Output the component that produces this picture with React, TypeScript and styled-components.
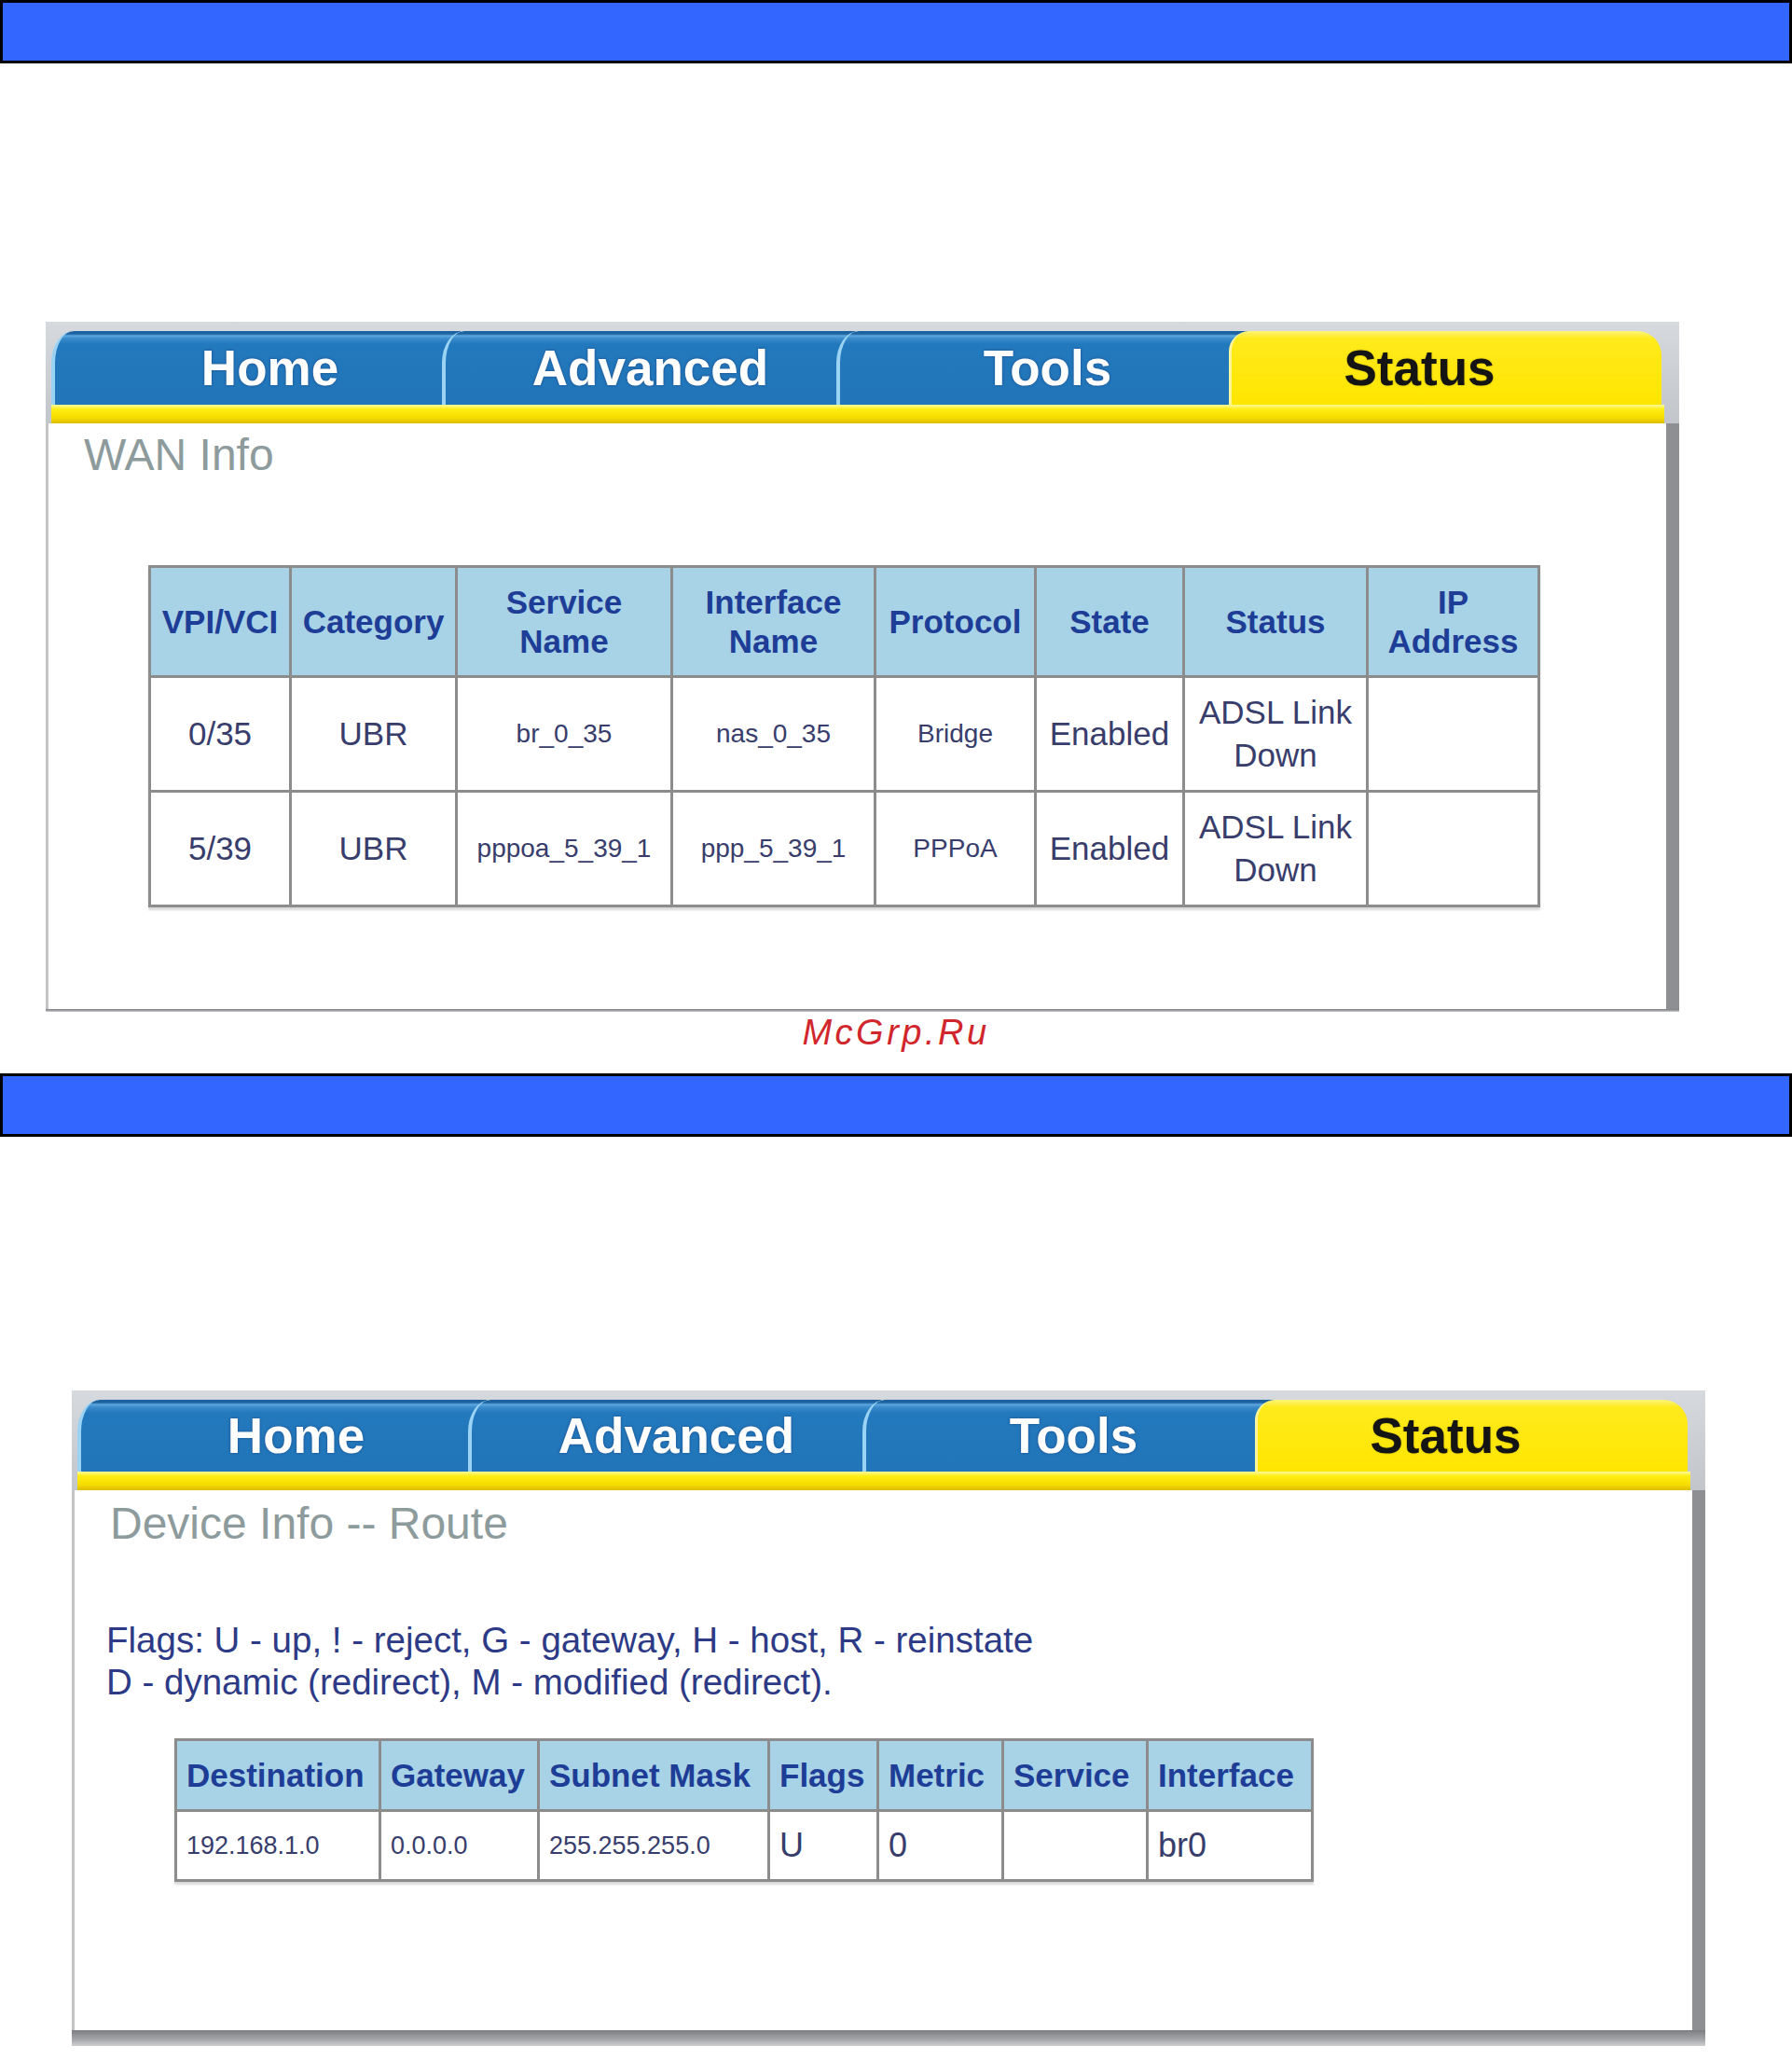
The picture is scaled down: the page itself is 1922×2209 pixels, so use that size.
import styled, { createGlobalStyle } from "styled-components";

const GlobalStyle = createGlobalStyle`
  html, body {
    margin: 0;
    padding: 0;
    background: #fff;
  }
  body {
    font-family: "Liberation Sans", Arial, sans-serif;
  }
`;

const Page = styled.div`
  display: flex;
  flex-direction: column;
  width: 1922px;
  height: 2209px;
  overflow: hidden;
`;

const BlueBar = styled.div<{ $gap: number }>`
  box-sizing: border-box;
  flex: 0 0 68px;
  margin-top: ${(p) => p.$gap}px;
  background: #3366ff;
  border: 3px solid #000;
`;

const Panel = styled.section<{ $left: number; $top: number }>`
  display: flex;
  flex-direction: column;
  width: 1752px;
  margin: ${(p) => p.$top}px 0 0 ${(p) => p.$left}px;
`;

const Head = styled.div`
  padding: 10px 16px 0 6px;
  background: linear-gradient(to bottom, #d6d9dd, #c2c6cb);
`;

const TabRow = styled.div<{ $h: number }>`
  display: flex;
  height: ${(p) => p.$h}px;
`;

const Tab = styled.div<{ $w: number; $active?: boolean; $shift: number }>`
  box-sizing: border-box;
  flex: 0 0 ${(p) => p.$w}px;
  margin-right: ${(p) => (p.$active ? 0 : -20)}px;
  display: flex;
  align-items: center;
  justify-content: center;
  padding-left: ${(p) => Math.max(0, p.$shift * 2)}px;
  padding-right: ${(p) => Math.max(0, -p.$shift * 2)}px;
  font: bold 53px/1 "Liberation Sans", Arial, sans-serif;
  ${(p) =>
    p.$active
      ? `
    color: #141414;
    background: linear-gradient(to bottom, #fff57a 0, #ffea1c 8px, #ffe600 100%);
    border-left: 3px solid #fff59a;
    border-radius: 22px 26px 0 0;
    text-shadow: 0 0 2px rgba(90, 80, 0, 0.4);
  `
      : `
    color: #fff;
    background: linear-gradient(
      to bottom,
      #1c62a0 0,
      #1c62a0 3px,
      #5ea8df 5px,
      #3a8bcb 8px,
      #2379bd 14px,
      #2175b8 100%
    );
    border-left: 4px solid #9ad3f3;
    border-top-left-radius: 24px 34px;
    text-shadow: 0 0 3px rgba(30, 70, 130, 0.9);
  `}
`;

const Stripe = styled.div`
  height: 20px;
  background: linear-gradient(
    to bottom,
    #fffa9c 0%,
    #ffee12 25%,
    #f8dc00 70%,
    #dcbc00 100%
  );
`;

const Body = styled.div<{ $h: number }>`
  box-sizing: border-box;
  height: ${(p) => p.$h}px;
  display: flex;
  flex-direction: column;
  align-items: flex-start;
  background: #fff;
  border-left: 3px solid #c4c4c4;
  border-right: 14px solid #8d8f93;
`;

const Footer = styled.div<{ $h: number }>`
  height: ${(p) => p.$h}px;
  background: linear-gradient(to bottom, #7c7e82, #a4a6a9 60%, #cfd0d2);
`;

const Title = styled.h2<{ $top: number }>`
  margin: ${(p) => p.$top}px 0 0 0;
  padding-left: 38px;
  font: normal 48px/52px "Liberation Sans", Arial, sans-serif;
  color: #8d9b9c;
`;

const Flags = styled.p`
  margin: 76px 0 0 0;
  padding-left: 34px;
  font: normal 38.5px/45px "Liberation Sans", Arial, sans-serif;
  color: #2d3a86;
`;

const Grid = styled.table<{ $top: number; $w: number }>`
  margin: ${(p) => p.$top}px 0 0 107px;
  width: ${(p) => p.$w}px;
  table-layout: fixed;
  border-collapse: collapse;
  border: 3px solid #8c8c8c;
  box-shadow: 0 3px 2px rgba(0, 0, 0, 0.15);
`;

const Col = styled.col<{ $w: number }>`
  width: ${(p) => p.$w}px;
`;

const Row = styled.tr<{ $h: number }>`
  height: ${(p) => p.$h}px;
`;

const HeadCell = styled.th<{ $left?: boolean }>`
  padding: 0 ${(p) => (p.$left ? "0 0 10px" : "4px")};
  border: 3px solid #8c8c8c;
  background: #a8d3e7;
  color: #1d3d96;
  font: bold 35px/42px "Liberation Sans", Arial, sans-serif;
  text-align: ${(p) => (p.$left ? "left" : "center")};
  white-space: nowrap;
`;

const Cell = styled.td<{ $size: number; $left?: boolean }>`
  padding: 0 ${(p) => (p.$left ? "0 0 10px" : "4px")};
  border: 3px solid #8c8c8c;
  background: #fff;
  color: #383d6c;
  font: normal ${(p) => p.$size}px/46px "Liberation Sans", Arial, sans-serif;
  text-align: ${(p) => (p.$left ? "left" : "center")};
  vertical-align: middle;
`;

const Watermark = styled.div`
  margin-top: 4px;
  height: 36px;
  text-align: center;
  font: italic 38px/36px "Liberation Sans", Arial, sans-serif;
  letter-spacing: 3.5px;
  color: #d1262c;
`;

const tabs = [
  { label: "Home", w: 439, shift: 13 },
  { label: "Advanced", w: 443, shift: 0 },
  { label: "Tools", w: 441, shift: 4 },
  { label: "Status", w: 464, shift: -29, active: true },
];

function TabBar({ h }: { h: number }) {
  return (
    <Head>
      <TabRow $h={h}>
        {tabs.map((t) => (
          <Tab key={t.label} $w={t.w} $shift={t.shift} $active={t.active}>
            {t.label}
          </Tab>
        ))}
      </TabRow>
      <Stripe />
    </Head>
  );
}

const wanCols = [151, 178, 231, 218, 172, 159, 197, 184];
const BIG = 35;
const SMALL = 28;

const wanRows = [
  [
    ["0/35", BIG],
    ["UBR", BIG],
    ["br_0_35", SMALL],
    ["nas_0_35", SMALL],
    ["Bridge", SMALL],
    ["Enabled", BIG],
    ["ADSL Link Down", BIG],
    ["", BIG],
  ],
  [
    ["5/39", BIG],
    ["UBR", BIG],
    ["pppoa_5_39_1", SMALL],
    ["ppp_5_39_1", SMALL],
    ["PPPoA", SMALL],
    ["Enabled", BIG],
    ["ADSL Link Down", BIG],
    ["", BIG],
  ],
] as [string, number][][];

const routeCols = [219, 170, 247, 117, 134, 155, 177];
const routeHead = ["Destination", "Gateway", "Subnet Mask", "Flags", "Metric", "Service", "Interface"];
const routeRow: [string, number][] = [
  ["192.168.1.0", 27],
  ["0.0.0.0", 27],
  ["255.255.255.0", 27],
  ["U", 36],
  ["0", 36],
  ["", 36],
  ["br0", 36],
];

export default function App() {
  return (
    <Page>
      <GlobalStyle />
      <BlueBar $gap={0} />

      <Panel $left={49} $top={277}>
        <TabBar h={79} />
        <Body $h={628}>
          <Title $top={8}>WAN Info</Title>
          <Grid $top={92} $w={1490}>
            <colgroup>
              {wanCols.map((w, i) => (
                <Col key={i} $w={w} />
              ))}
            </colgroup>
            <thead>
              <Row $h={118}>
                <HeadCell>VPI/VCI</HeadCell>
                <HeadCell>Category</HeadCell>
                <HeadCell>
                  Service
                  <br />
                  Name
                </HeadCell>
                <HeadCell>
                  Interface
                  <br />
                  Name
                </HeadCell>
                <HeadCell>Protocol</HeadCell>
                <HeadCell>State</HeadCell>
                <HeadCell>Status</HeadCell>
                <HeadCell>
                  IP
                  <br />
                  Address
                </HeadCell>
              </Row>
            </thead>
            <tbody>
              {wanRows.map((row, r) => (
                <Row key={r} $h={123}>
                  {row.map(([text, size], c) => (
                    <Cell key={c} $size={size}>
                      {text}
                    </Cell>
                  ))}
                </Row>
              ))}
            </tbody>
          </Grid>
        </Body>
        <Footer $h={3} />
      </Panel>

      <Watermark>McGrp.Ru</Watermark>
      <BlueBar $gap={26} />

      <Panel $left={77} $top={272}>
        <TabBar h={77} />
        <Body $h={579}>
          <Title $top={10}>Device Info -- Route</Title>
          <Flags>
            Flags: U - up, ! - reject, G - gateway, H - host, R - reinstate
            <br />
            D - dynamic (redirect), M - modified (redirect).
          </Flags>
          <Grid $top={38} $w={1219}>
            <colgroup>
              {routeCols.map((w, i) => (
                <Col key={i} $w={w} />
              ))}
            </colgroup>
            <thead>
              <Row $h={76}>
                {routeHead.map((h) => (
                  <HeadCell key={h} $left>
                    {h}
                  </HeadCell>
                ))}
              </Row>
            </thead>
            <tbody>
              <Row $h={75}>
                {routeRow.map(([text, size], c) => (
                  <Cell key={c} $size={size} $left>
                    {text}
                  </Cell>
                ))}
              </Row>
            </tbody>
          </Grid>
        </Body>
        <Footer $h={17} />
      </Panel>
    </Page>
  );
}
